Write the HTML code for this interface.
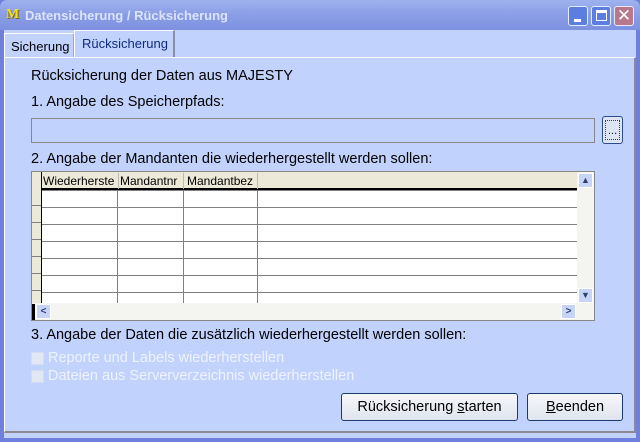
<!DOCTYPE html>
<html><head><style>
*{margin:0;padding:0;box-sizing:border-box}
body{width:640px;height:442px;overflow:hidden;font-family:"Liberation Sans",sans-serif;font-size:14.5px;background:#6f80dc;position:relative}
.a{position:absolute}
.t{position:absolute;white-space:nowrap;color:#000}
</style></head><body>
<div class="a" style="left:0;top:0;width:640px;height:30px;background:linear-gradient(#9fb2ee,#8a9de6 50%,#7d91e0);border-radius:7px 7px 0 0"></div>
<div class="t" style="left:6px;top:7px;font:bold 14px 'Liberation Serif',serif;color:#f0e020;text-shadow:1px 1px #806000">M</div>
<div class="t" style="left:25px;top:8px;font-weight:bold;color:#dce4fb;font-size:13px">Datensicherung / Rücksicherung</div>
<div class="a" style="left:568px;top:6px;width:20px;height:20px;border:1px solid #e6ecff;border-radius:3px;background:#5b7ee0"><div class="a" style="left:5px;top:12px;width:7px;height:3px;background:#fff"></div></div>
<div class="a" style="left:591px;top:6px;width:20px;height:20px;border:1px solid #e6ecff;border-radius:3px;background:#5b7ee0"><div class="a" style="left:4px;top:3px;width:11px;height:11px;border:1px solid #fff;border-top-width:3px"></div></div>
<div class="a" style="left:614px;top:6px;width:20px;height:20px;border:1px solid #e6ecff;border-radius:3px;background:#b8788c;color:#fff;font-size:17px;text-align:center;line-height:18px">✕</div>
<div class="a" style="left:4px;top:30px;width:632px;height:408px;background:#c1d3fc"></div>
<div class="a" style="left:4px;top:33px;width:70px;height:25px;border:1px solid #fff;border-bottom:none;border-right:1px solid #a0a8c0"></div>
<div class="t" style="left:11px;top:39px;font-size:13px">Sicherung</div>
<div class="a" style="left:74px;top:30px;width:101px;height:28px;border:1px solid #fff;border-right:2px solid #8890a8;border-bottom:none;background:#c1d3fc"></div>
<div class="t" style="left:82px;top:36px;font-size:13px;color:#102a80">Rücksicherung</div>
<div class="a" style="left:4px;top:57px;width:632px;height:376px;border-top:1px solid #fff;border-left:1px solid #fff;border-right:2px solid #8a8a90;border-bottom:2px solid #8a8a90"></div>
<div class="a" style="left:176px;top:57px;width:459px;height:1px;background:#fff"></div>
<div class="t" style="left:31px;top:68px">Rücksicherung der Daten aus MAJESTY</div>
<div class="t" style="left:31px;top:94px">1. Angabe des Speicherpfads:</div>
<div class="a" style="left:31px;top:118px;width:564px;height:25px;border:1px solid #888;background:#c1d3fc"></div>
<div class="a" style="left:602px;top:116px;width:21px;height:28px;border:1px solid #2c4c8c;border-radius:3px;background:#dde4f4"><div class="a" style="left:2px;top:3px;width:15px;height:20px;border:1px dotted #603020"></div><div class="t" style="left:5px;top:8px;font-size:11px">...</div></div>
<div class="t" style="left:31px;top:151px">2. Angabe der Mandanten die wiederhergestellt werden sollen:</div>
<div class="a" style="left:31px;top:171px;width:564px;height:150px;border:1px solid #888;background:#fff;overflow:hidden">
<div class="a" style="left:0;top:2px;width:546px;height:130px;background:repeating-linear-gradient(transparent 0 16px,#808080 16px 17px)"></div>
<div class="a" style="left:0;top:0;width:546px;height:18px;background:#ece9d8;border-bottom:2px solid #000"></div>
<div class="t" style="left:11px;top:2px;font-size:12px">Wiederherste</div>
<div class="t" style="left:88px;top:2px;font-size:12px">Mandantnr</div>
<div class="t" style="left:155px;top:2px;font-size:12px">Mandantbez</div>
<div class="a" style="left:86px;top:1px;width:1px;height:16px;background:#bbb"></div>
<div class="a" style="left:151px;top:1px;width:1px;height:16px;background:#bbb"></div>
<div class="a" style="left:225px;top:1px;width:1px;height:16px;background:#bbb"></div>
<div class="a" style="left:0;top:0;width:9px;height:131px;background:repeating-linear-gradient(#ece9d8 0 16px,#808080 16px 17px)"></div>
<div class="a" style="left:0;top:0;width:9px;height:18px;background:#ece9d8"></div>
<div class="a" style="left:9px;top:0;width:1px;height:131px;background:#000"></div>
<div class="a" style="left:85px;top:19px;width:1px;height:112px;background:#808080"></div>
<div class="a" style="left:151px;top:19px;width:1px;height:112px;background:#808080"></div>
<div class="a" style="left:225px;top:19px;width:1px;height:112px;background:#808080"></div>
<div class="a" style="left:0;top:131px;width:562px;height:17px;background:#f4f4f0"></div>
<div class="a" style="left:0;top:132px;width:3px;height:16px;background:#000"></div>
<div class="a" style="left:4px;top:132px;width:15px;height:15px;background:#c6d4f6;border:1px solid #fff;font-size:10px;color:#304070;text-align:center;line-height:13px;font-weight:bold">&lt;</div>
<div class="a" style="left:529px;top:132px;width:15px;height:15px;background:#c6d4f6;border:1px solid #fff;font-size:10px;color:#304070;text-align:center;line-height:13px;font-weight:bold">&gt;</div>
<div class="a" style="left:545px;top:0;width:17px;height:131px;background:#f4f4f0"></div>
<div class="a" style="left:546px;top:1px;width:15px;height:15px;background:#c6d4f6;border:1px solid #fff;font-size:9px;color:#304070;text-align:center;line-height:13px">▲</div>
<div class="a" style="left:546px;top:116px;width:15px;height:15px;background:#c6d4f6;border:1px solid #fff;font-size:9px;color:#304070;text-align:center;line-height:13px">▼</div>
</div>
<div class="t" style="left:31px;top:327px">3. Angabe der Daten die zusätzlich wiederhergestellt werden sollen:</div>
<div class="a" style="left:31px;top:352px;width:13px;height:13px;background:#e2e7f4;border:1px solid #d4dcf0"></div>
<div class="t" style="left:48px;top:350px;color:#eef2ff">Reporte und Labels wiederherstellen</div>
<div class="a" style="left:31px;top:370px;width:13px;height:13px;background:#e2e7f4;border:1px solid #d4dcf0"></div>
<div class="t" style="left:48px;top:368px;color:#eef2ff">Dateien aus Serververzeichnis wiederherstellen</div>
<div class="a" style="left:341px;top:393px;width:177px;height:28px;border:1px solid #1c3a70;border-radius:3px;background:linear-gradient(#f6f7fa,#dfe4ee);text-align:center;line-height:26px;font-size:14.5px">Rücksicherung <u>s</u>tarten</div>
<div class="a" style="left:527px;top:393px;width:96px;height:28px;border:1px solid #1c3a70;border-radius:3px;background:linear-gradient(#f6f7fa,#dfe4ee);text-align:center;line-height:26px;font-size:14.5px"><u>B</u>eenden</div>
</body></html>
